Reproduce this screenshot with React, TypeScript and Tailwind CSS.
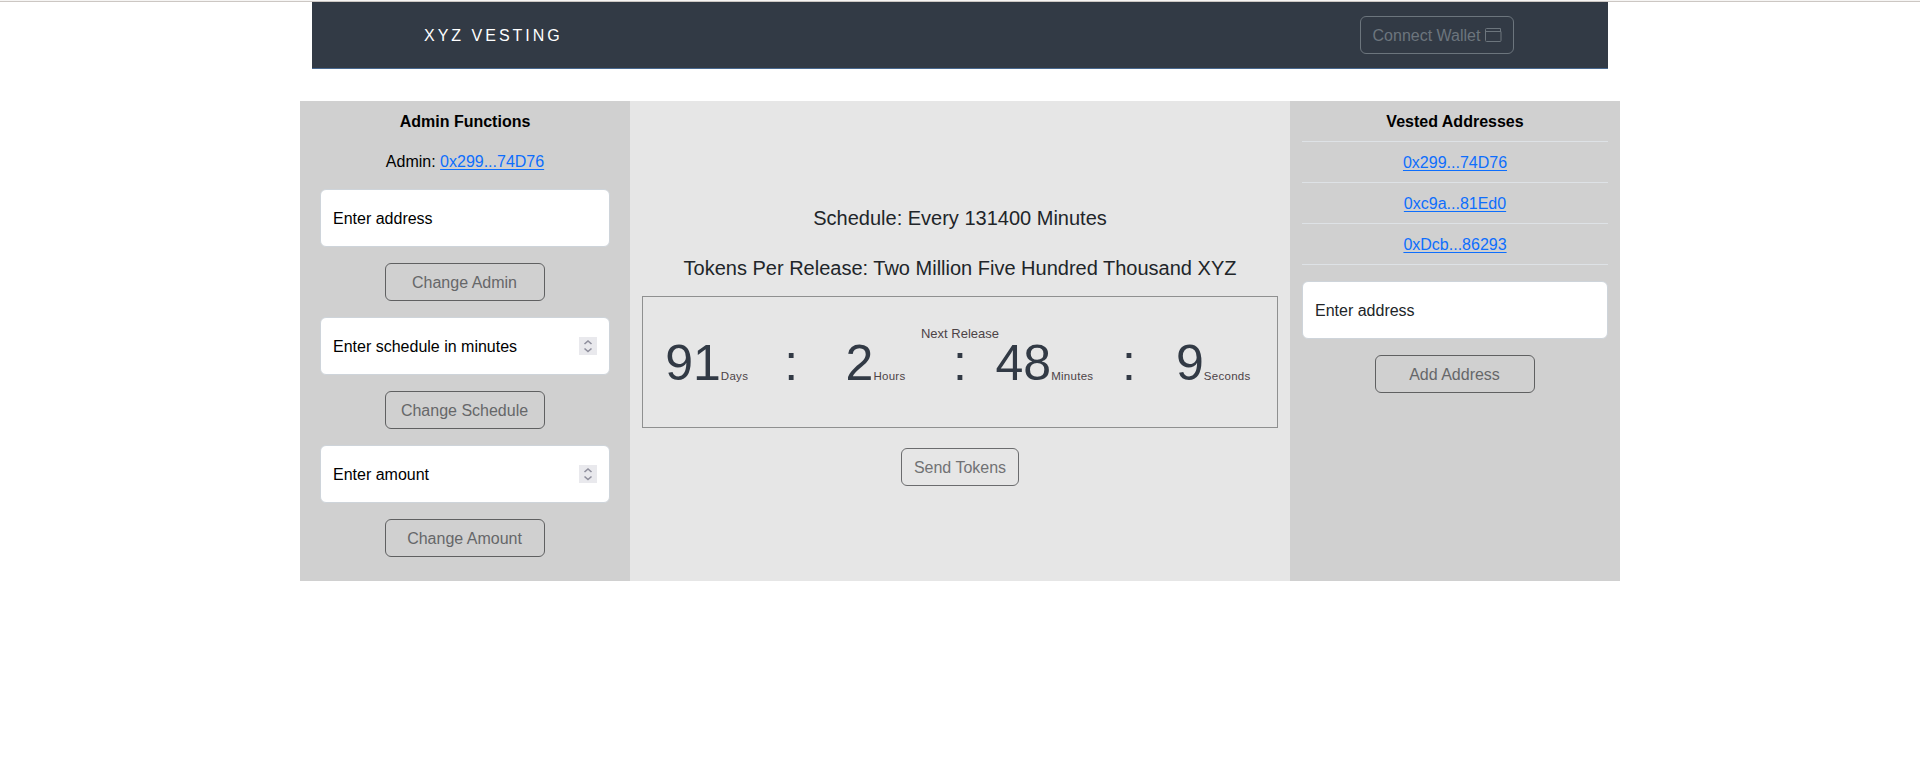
import type { ReactNode } from "react";

function OutlineButton({ children, className }: { children: ReactNode; className: string }) {
  return (
    <button type="button" className={`flex h-[38px] items-center justify-center rounded-md border pt-0.5 text-base leading-6 ${className}`}>
      {children}
    </button>
  );
}

function Spinner() {
  return (
    <svg width="18" height="18" viewBox="0 0 18 18" fill="none" className="bg-[#e9e9ed]">
      <path d="M5.5 7 L9 4 L12.5 7 M5.5 11.5 L9 14.5 L12.5 11.5" stroke="#8f8f9d" strokeWidth="1.6" />
    </svg>
  );
}

function Field({ label, numeric = false, className }: { label: string; numeric?: boolean; className: string }) {
  return (
    <div className={`flex h-[58px] items-center justify-between rounded-md border border-[#ced4da] bg-white px-3 ${className}`}>
      <span className="pt-0.5">{label}</span>
      {numeric && <Spinner />}
    </div>
  );
}

function AddressLink({ children }: { children: string }) {
  return (
    <a href="#" className="text-[#0d6efd] underline decoration-1 underline-offset-2">
      {children}
    </a>
  );
}

function AdminPanel() {
  const actions = [
    { label: "Enter address", button: "Change Admin", numeric: false },
    { label: "Enter schedule in minutes", button: "Change Schedule", numeric: true },
    { label: "Enter amount", button: "Change Amount", numeric: true },
  ];
  return (
    <section className="flex w-[330px] flex-col items-center bg-[#d0d0d0] pt-[9px] text-black">
      <h2 className="font-bold">Admin Functions</h2>
      <p className="mt-4 mb-[15px]">
        Admin: <AddressLink>0x299...74D76</AddressLink>
      </p>
      {actions.map((a) => (
        <div key={a.button} className="mb-4 flex flex-col items-center gap-4">
          <Field label={a.label} numeric={a.numeric} className="w-[290px]" />
          <OutlineButton className="w-40 border-[#5f6061] pr-px text-[#666769]">{a.button}</OutlineButton>
        </div>
      ))}
    </section>
  );
}

function Unit({ value, name }: { value: number; name: string }) {
  return (
    <div className="flex items-baseline justify-center whitespace-nowrap">
      <span className="text-[50px] leading-[50px] text-[#323a45]">{value}</span>
      <span className="text-[11.5px] tracking-[0.28px] text-[#4c4346]">{name}</span>
    </div>
  );
}

function Colon() {
  return <div className="text-center text-[50px] leading-[50px] text-[#323a45]">:</div>;
}

function SchedulePanel() {
  return (
    <section className="flex w-[660px] flex-col items-center bg-[#e6e6e6] px-3 pt-[102px]">
      <p className="text-xl leading-[30px]">Schedule: Every 131400 Minutes</p>
      <p className="mt-5 text-xl leading-[30px]">Tokens Per Release: Two Million Five Hundred Thousand XYZ</p>
      <div className="mt-[13px] h-[132px] w-full border border-[#8f9090] pt-[31px]">
        <div className="text-center text-[13px] leading-3 text-[#4c4346]">Next Release</div>
        <div className="mx-auto -mt-0.5 grid w-[591px] grid-cols-[repeat(7,minmax(0,1fr))]">
          <Unit value={91} name="Days" />
          <Colon />
          <Unit value={2} name="Hours" />
          <Colon />
          <Unit value={48} name="Minutes" />
          <Colon />
          <Unit value={9} name="Seconds" />
        </div>
      </div>
      <OutlineButton className="mt-5 w-[118px] border-[#6b6c6e] text-[#717274]">Send Tokens</OutlineButton>
    </section>
  );
}

function VestedPanel() {
  const addresses = ["0x299...74D76", "0xc9a...81Ed0", "0xDcb...86293"];
  return (
    <section className="flex w-[330px] flex-col items-center bg-[#d0d0d0] px-3">
      <h2 className="h-[41px] w-full border-b border-[#dee2e6] pt-[9px] text-center font-bold text-black">Vested Addresses</h2>
      {addresses.map((a) => (
        <div key={a} className="h-[41px] w-full border-b border-[#dee2e6] pt-[9px] text-center">
          <AddressLink>{a}</AddressLink>
        </div>
      ))}
      <Field label="Enter address" className="mt-4 w-full" />
      <OutlineButton className="mt-4 w-40 border-[#5f6061] pr-px text-[#666769]">Add Address</OutlineButton>
    </section>
  );
}

export default function App() {
  return (
    <div className="min-h-screen bg-white font-['Liberation_Sans',Arial,sans-serif] text-base leading-6 text-[#212529]">
      <div className="h-0.5 border-b border-[#ccc7c3] bg-[#f6f5f4]" />
      <header className="mx-auto flex h-[67px] w-[1296px] justify-between border-b border-[#48688f] bg-[#323a45] pr-[94px] pl-28">
        <span className="pt-[22px] tracking-[3px] text-white">XYZ VESTING</span>
        <OutlineButton className="mt-3.5 w-[154px] gap-[5px] border-[#6c757d] pl-px text-[#6c757d]">
          Connect Wallet
          <svg width="17" height="16" viewBox="0 0 17 16" fill="none" stroke="currentColor">
            <path d="M15.5 3.5 V0.5 H1.5 a1 1 0 0 0 -1 1 V12.5 a1 1 0 0 0 1 1 H15 a1 1 0 0 0 1 -1 V3.5 H0.5" />
          </svg>
        </OutlineButton>
      </header>
      <main className="mx-auto mt-8 flex h-[480px] w-[1320px]">
        <AdminPanel />
        <SchedulePanel />
        <VestedPanel />
      </main>
    </div>
  );
}
